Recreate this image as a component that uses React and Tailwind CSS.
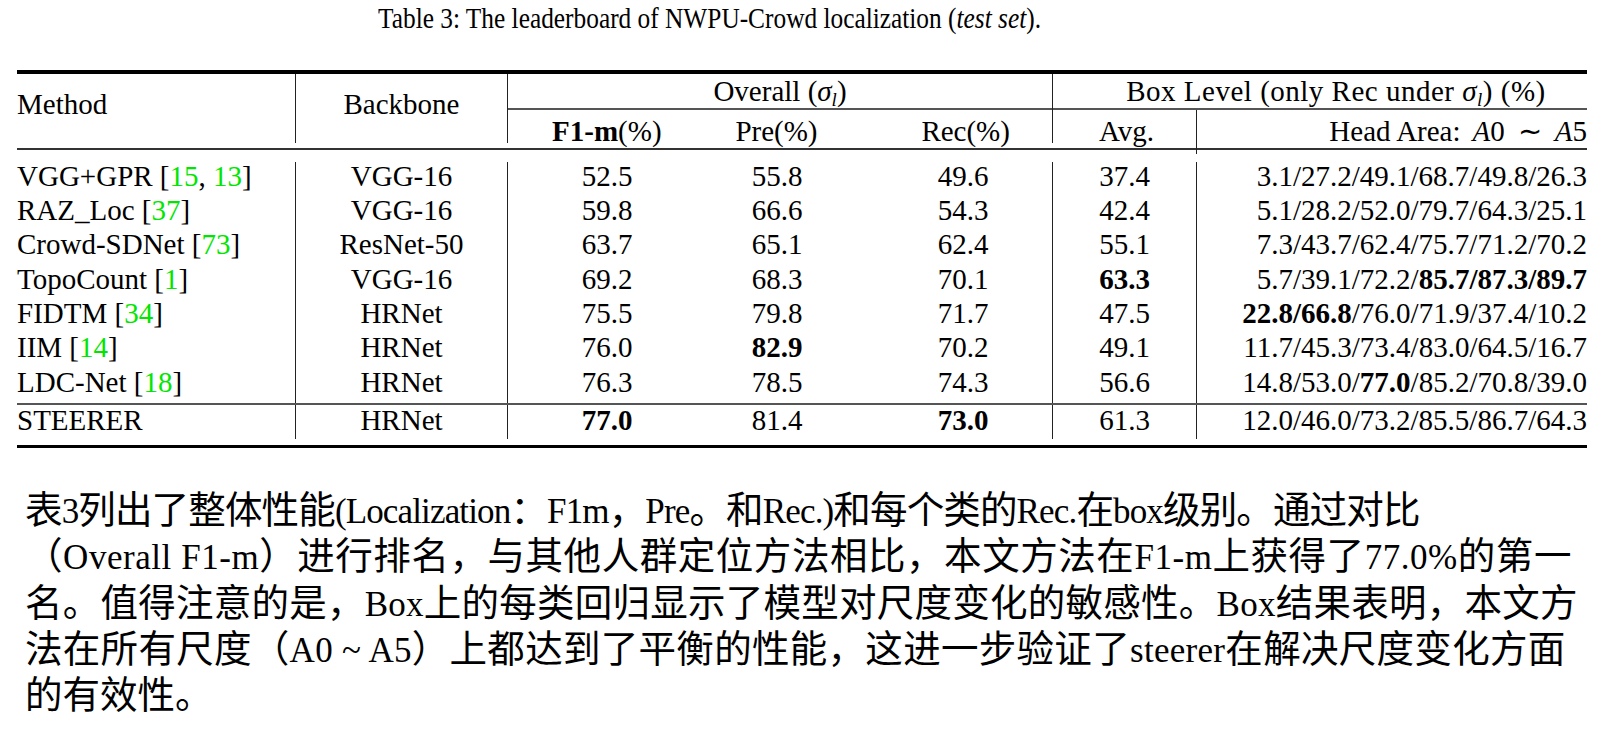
import React from "react";

/* ----------------------------- DATA ----------------------------- */
const rows = [
  { method: "VGG+GPR", refs: ["15", "13"], backbone: "VGG-16", f1: "52.5", pre: "55.8", rec: "49.6", avg: "37.4", head: [["3.1/27.2/49.1/68.7/49.8/26.3", false]] },
  { method: "RAZ_Loc", refs: ["37"], backbone: "VGG-16", f1: "59.8", pre: "66.6", rec: "54.3", avg: "42.4", head: [["5.1/28.2/52.0/79.7/64.3/25.1", false]] },
  { method: "Crowd-SDNet", refs: ["73"], backbone: "ResNet-50", f1: "63.7", pre: "65.1", rec: "62.4", avg: "55.1", head: [["7.3/43.7/62.4/75.7/71.2/70.2", false]] },
  { method: "TopoCount", refs: ["1"], backbone: "VGG-16", f1: "69.2", pre: "68.3", rec: "70.1", avg: "63.3", avgBold: true, head: [["5.7/39.1/72.2/", false], ["85.7/87.3/89.7", true]] },
  { method: "FIDTM", refs: ["34"], backbone: "HRNet", f1: "75.5", pre: "79.8", rec: "71.7", avg: "47.5", head: [["22.8/66.8", true], ["/76.0/71.9/37.4/10.2", false]] },
  { method: "IIM", refs: ["14"], backbone: "HRNet", f1: "76.0", pre: "82.9", preBold: true, rec: "70.2", avg: "49.1", head: [["11.7/45.3/73.4/83.0/64.5/16.7", false]] },
  { method: "LDC-Net", refs: ["18"], backbone: "HRNet", f1: "76.3", pre: "78.5", rec: "74.3", avg: "56.6", head: [["14.8/53.0/", false], ["77.0", true], ["/85.2/70.8/39.0", false]] },
];

const ours = { method: "STEERER", refs: [], backbone: "HRNet", f1: "77.0", f1Bold: true, pre: "81.4", rec: "73.0", recBold: true, avg: "61.3", head: [["12.0/46.0/73.2/85.5/86.7/64.3", false]] };

/* each line of the paragraph, with the tracking that fits it to the reference */
const paragraph = [
  { text: "表3列出了整体性能(Localization：F1m，Pre。和Rec.)和每个类的Rec.在box级别。通过对比", track: "tracking-[-0.85px]" },
  { text: "（Overall F1-m）进行排名，与其他人群定位方法相比，本文方法在F1-m上获得了77.0%的第一", track: "tracking-[0.55px]" },
  { text: "名。值得注意的是，Box上的每类回归显示了模型对尺度变化的敏感性。Box结果表明，本文方", track: "tracking-[0.25px]" },
  { text: "法在所有尺度（A0 ~ A5）上都达到了平衡的性能，这进一步验证了steerer在解决尺度变化方面", track: "tracking-[0.3px]" },
  { text: "的有效性。", track: "" },
];

const serif = { fontFamily: "'Liberation Serif', 'Times New Roman', serif" };

/* Latin runs are set a little smaller than the CJK characters */
const MixedLine = ({ text, track }) => {
  const parts = text.match(/[\x20-\x7e]+|[^\x20-\x7e]+/g) || [];
  return (
    <div className={`whitespace-pre ${track}`}>
      {parts.map((p, i) =>
        /^[\x20-\x7e]+$/.test(p) ? (
          <span key={i} className="text-[35px]">{p}</span>
        ) : (
          <span key={i}>{p}</span>
        )
      )}
    </div>
  );
};

const Sigma = () => (
  <>
    <i>σ</i>
    <sub className="text-[19px] italic">l</sub>
  </>
);

/* --------------------------- TABLE ROW -------------------------- */
const Row = ({ r, rowClass, lead }) => (
  <div className={`flex ${rowClass}`}>
    <div className={`w-[279px] border-r border-[#222] ${lead}`}>
      {r.method}
      {r.refs.length > 0 && (
        <>
          {" ["}
          {r.refs.map((ref, i) => (
            <React.Fragment key={ref}>
              {i > 0 && ", "}
              <span className="text-[#00e600]">{ref}</span>
            </React.Fragment>
          ))}
          {"]"}
        </>
      )}
    </div>
    <div className={`w-[212px] border-r border-[#222] text-center ${lead}`}>{r.backbone}</div>
    <div className={`w-[198px] text-center ${lead} ${r.f1Bold ? "font-bold" : ""}`}>{r.f1}</div>
    <div className={`w-[142px] text-center ${lead} ${r.preBold ? "font-bold" : ""}`}>{r.pre}</div>
    <div className={`w-[205px] pl-[26px] border-r border-[#222] text-center ${lead} ${r.recBold ? "font-bold" : ""}`}>{r.rec}</div>
    <div className={`w-[144px] border-r border-[#222] text-center ${lead} ${r.avgBold ? "font-bold" : ""}`}>{r.avg}</div>
    <div className={`w-[390px] text-right ${lead}`}>
      {r.head.map(([t, b], i) => (
        <span key={i} className={b ? "font-bold" : ""}>{t}</span>
      ))}
    </div>
  </div>
);

/* ------------------------------ UI ------------------------------- */
export default function App() {
  return (
    <div className="w-[1612px] h-[736px] bg-white text-black overflow-hidden" style={serif}>
      {/* Caption */}
      <div className="h-[70px] pl-[378px] pt-[1px]">
        <div className="inline-block origin-left scale-x-[0.845] text-[30px] leading-[34px] whitespace-nowrap">
          Table 3: The leaderboard of NWPU-Crowd localization (<i>test set</i>).
        </div>
      </div>

      {/* Table */}
      <div className="ml-[17px] w-[1570px] text-[29px]">
        <div className="border-t-4 border-black">
          <div className="flex h-[69px]">
            <div className="w-[279px] border-r border-[#222] flex items-center pb-[7px]">Method</div>
            <div className="w-[212px] border-r border-[#222] flex items-center justify-center pb-[7px]">Backbone</div>
            <div className="w-[545px] border-r border-[#222] flex flex-col">
              <div className="h-[36px] border-b-2 border-[#555] flex items-center justify-center pt-[1px]">
                <span>
                  Overall (<Sigma />)
                </span>
              </div>
              <div className="flex flex-1 items-center">
                <div className="w-[198px] text-center">
                  <b>F1-m</b>(%)
                </div>
                <div className="w-[142px] text-center">Pre(%)</div>
                <div className="w-[205px] pl-[32px] text-center">Rec(%)</div>
              </div>
            </div>
            <div className="flex-1 flex flex-col">
              <div className="h-[36px] border-b-2 border-[#555] flex items-center justify-center pt-[1px] pl-[32px] whitespace-pre tracking-[0.5px]">
                <span>
                  {"Box Level (only Rec under "}
                  <Sigma />
                  {") (%)"}
                </span>
              </div>
              <div className="flex flex-1">
                <div className="w-[144px] border-r border-[#222] flex items-center justify-center pl-[4px]">Avg.</div>
                <div className="flex-1 flex items-center justify-end">
                  <span className="mr-[12px]">Head Area:</span>
                  <i>A</i>
                  <span>0</span>
                  <span className="mx-[13px]">∼</span>
                  <i>A</i>
                  <span>5</span>
                </div>
              </div>
            </div>
          </div>
        </div>
        <div className="h-[5px]" />
        <div className="h-[2px] bg-[#333]" />
        <div className="h-[12px]" />

        {/* Body */}
        {rows.map((r, i) => (
          <Row
            key={r.method}
            r={r}
            rowClass={i === 0 ? "h-[31px]" : i === rows.length - 1 ? "h-[38.33px]" : "h-[34.33px]"}
            lead={i === 0 ? "leading-[28px]" : "leading-[34.33px]"}
          />
        ))}
        <div className="h-[2px] bg-[#555]" />
        <Row r={ours} rowClass="h-[34px]" lead="leading-[31px]" />
        <div className="h-[6px]" />
        <div className="h-[3px] bg-black" />
      </div>

      {/* Paragraph */}
      <div
        className="mt-[40px] pl-[25px] text-[37.5px] leading-[45.3px]"
        style={{ fontFamily: "'Liberation Serif', 'Noto Sans CJK SC', serif" }}
      >
        {paragraph.map((line) => (
          <MixedLine key={line.text} text={line.text} track={line.track} />
        ))}
      </div>
    </div>
  );
}
